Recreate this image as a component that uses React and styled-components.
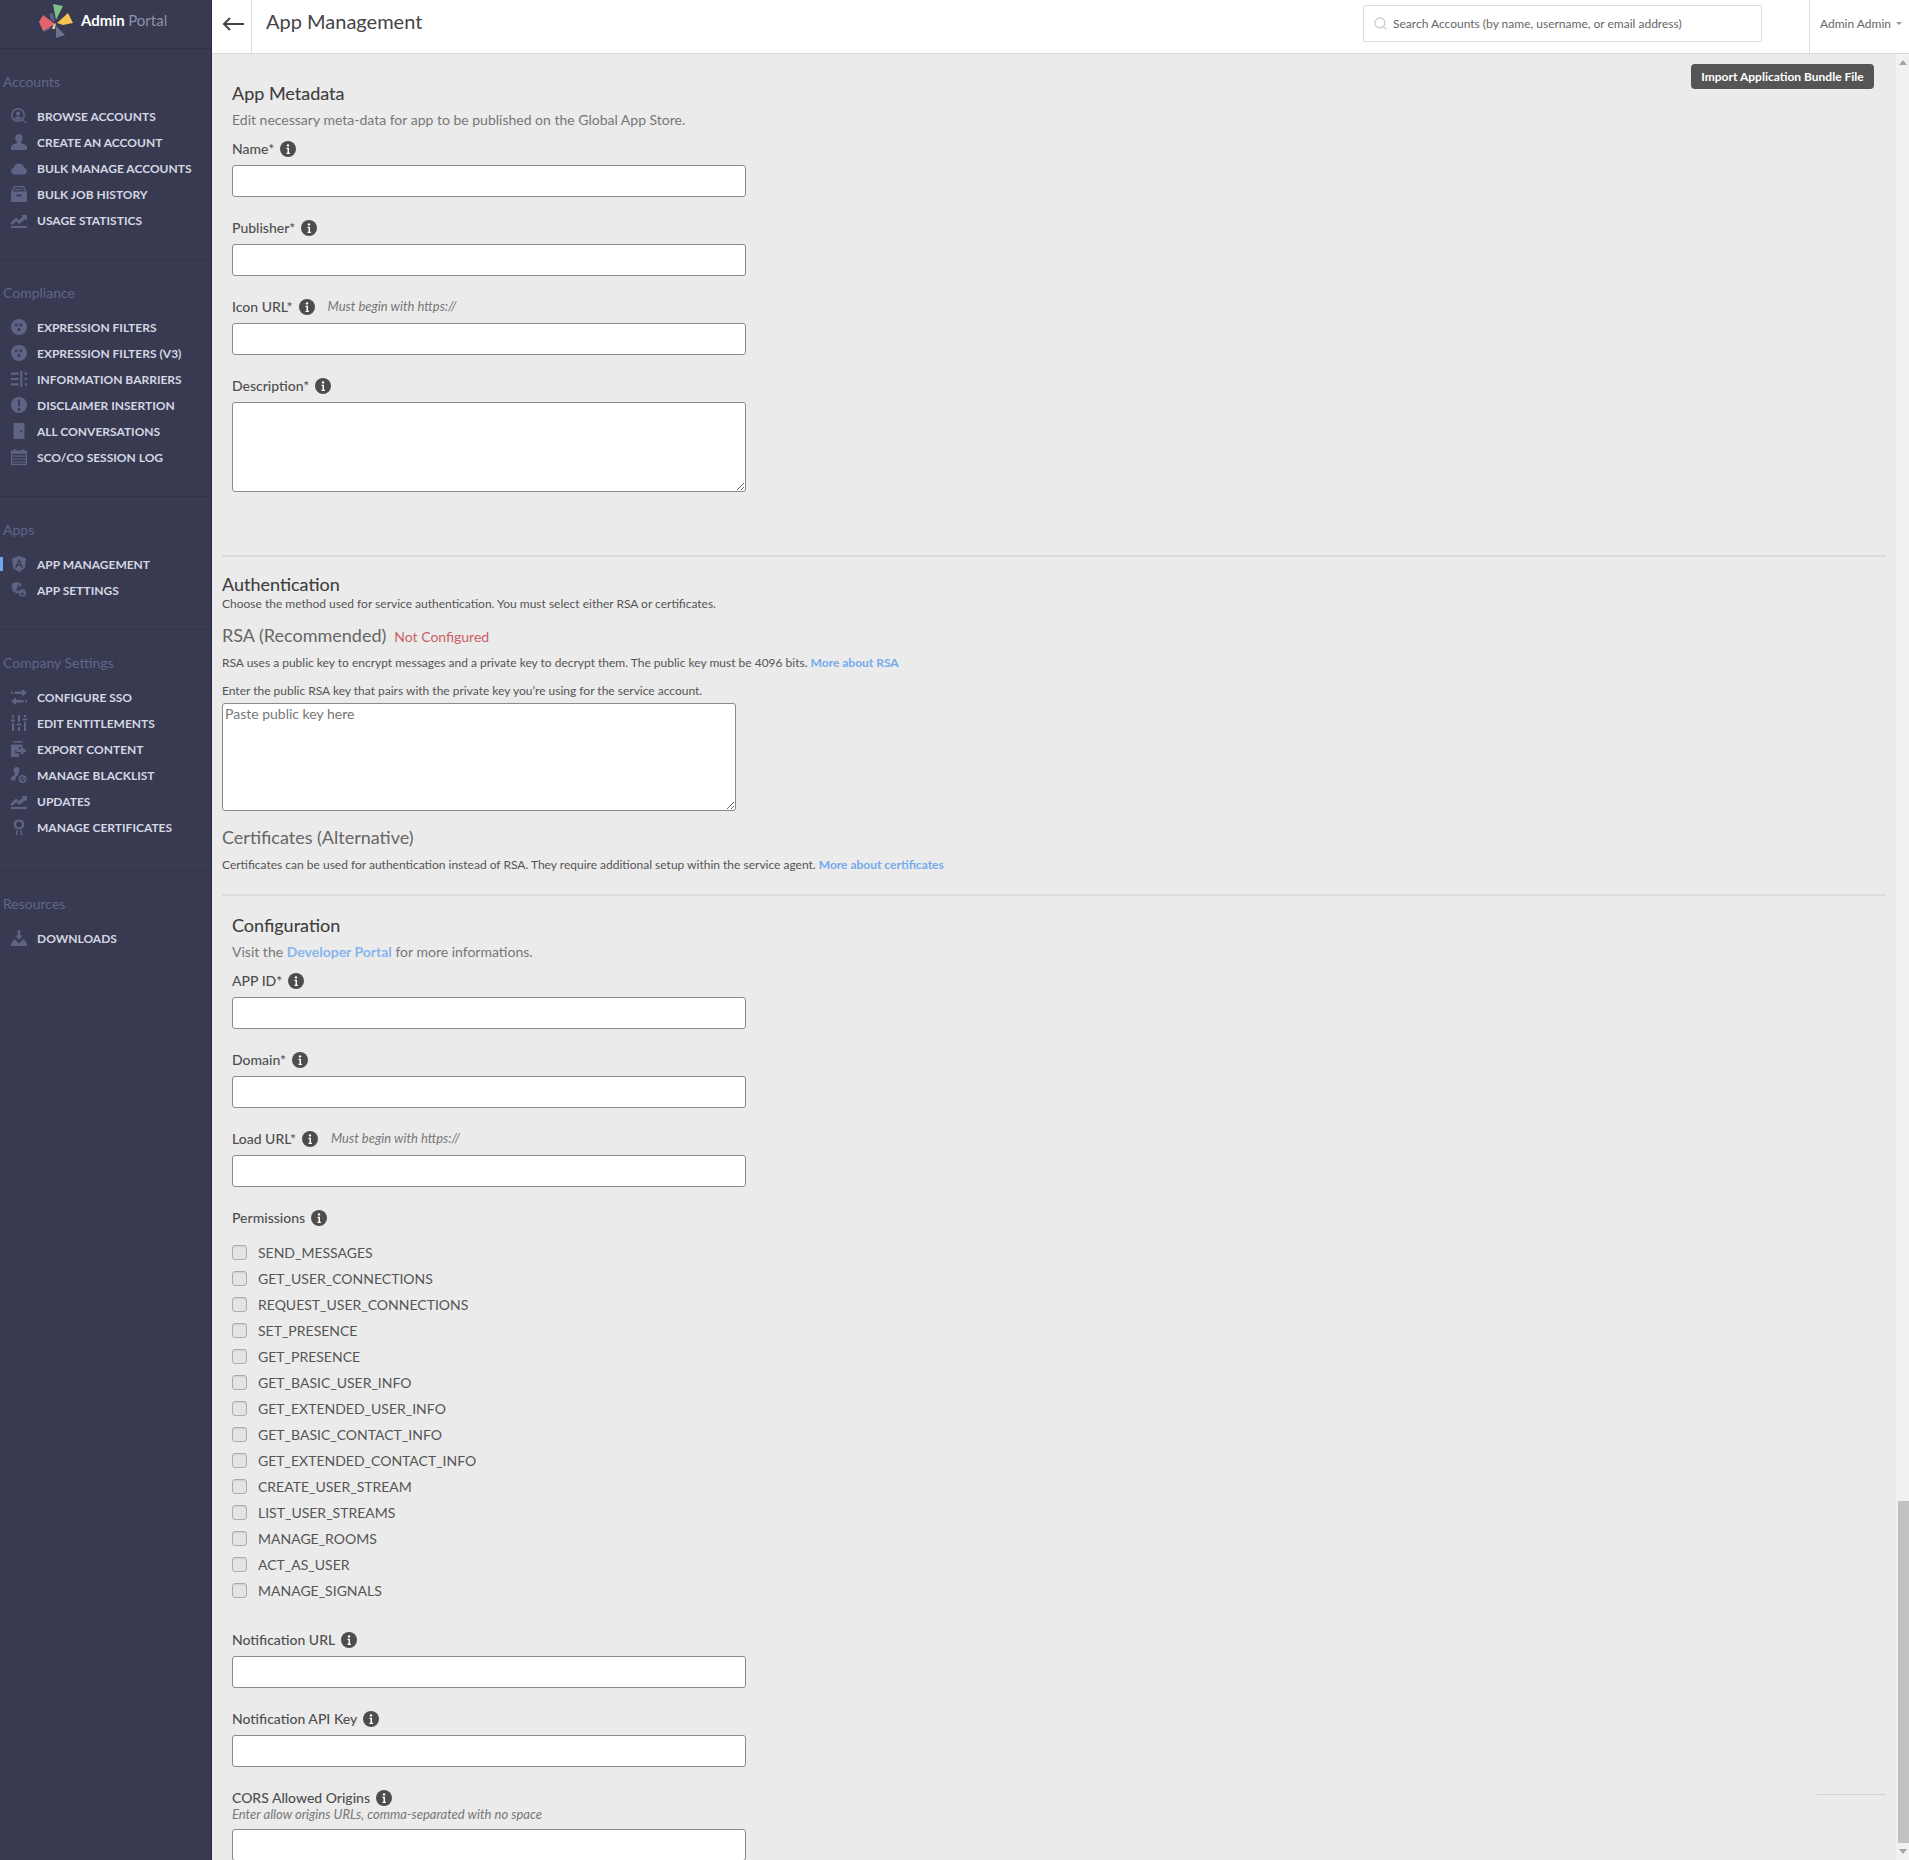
import React from 'react';
import styled, { createGlobalStyle } from 'styled-components';
import { Search } from 'lucide-react';

const GlobalStyle = createGlobalStyle`
    html, body {
        margin: 0;
        padding: 0;
        height: 1860px;
        overflow: hidden;
        background: #ebebeb;
        font-family: Lato, "Liberation Sans", sans-serif;
    }
    * { box-sizing: border-box; }
`;

const icons = {
    browse: <><path fillRule="evenodd" d="M7 0a7 7 0 1 1 0 14A7 7 0 0 1 7 0zm0 1.600a5.400 5.400 0 1 0 0 10.800A5.400 5.400 0 0 0 7 1.600z" /><circle cx="7" cy="5.600" r="2.100" /><path d="M3.400 10.200C4 8.800 5.400 8.400 7 8.400s3 .4 3.600 1.800A5 5 0 0 1 7 12a5 5 0 0 1-3.600-1.800zM11.400 11.200l4.400 3.600-1 1-4.300-3.700z" /></>,
    user: <path d="M8 0c2.300 0 3.700 1.700 3.700 4.100 0 1.600-.7 3-1.600 3.800v1.400c2.700.6 5.500 1.500 5.900 3.400V15c0 .6-.4 1-1 1H1c-.6 0-1-.4-1-1v-2.300c.4-1.900 3.200-2.800 5.900-3.400V7.900C5 7.100 4.300 5.700 4.300 4.100 4.300 1.700 5.700 0 8 0z" />,
    cloud: <path d="M3.400 14.500C1.500 14.500 0 13 0 11.200c0-1.600 1.100-2.900 2.600-3.200C3 5.400 5.300 3.500 8 3.500c2.600 0 4.800 1.800 5.300 4.300 1.600.4 2.700 1.800 2.700 3.400 0 1.800-1.500 3.300-3.400 3.300z" />,
    archive: <path fillRule="evenodd" d="M3 0h10l3 6.500V15c0 .6-.4 1-1 1H1c-.6 0-1-.4-1-1V6.500zm.9 1.300L2 5.600h12l-1.900-4.300zM4 3h8v.9H4zM5.500 8.500v2h5v-2z" />,
    chart: <path d="M0 10.300l5-4.800 3 2.500 3.800-3.500-1.500-1.500H16v5.500l-1.500-1.500L8.200 12 5.200 9.200 1.500 12.500H0zM0 14h16v2H0z" />,
    face: <path fillRule="evenodd" d="M8 0a8 8 0 1 1 0 16A8 8 0 0 1 8 0zM4.200 4.200l-.7.700 1 1-1 1 .7.700 1-1 1 1 .7-.7-1-1 1-1-.7-.7-1 1zm6.600 0l-1 1-1-1-.7.700 1 1-1 1 .7.700 1-1 1 1 .7-.7-1-1 1-1zM8 9c-.9 0-1.600.7-1.600 1.500v1.200h3.200v-1.200C9.600 9.700 8.900 9 8 9z" />,
    barriers: <path d="M0 1.500h7.500v2.200H0zM0 6.900h7.500v2.200H0zM0 12.300h7.500v2.200H0zM9.300 0h2v16h-2zM13.600 1.500H16v2.200h-2.400zM13.600 6.900H16v2.200h-2.400zM13.600 12.300H16v2.200h-2.400z" />,
    alert: <path fillRule="evenodd" d="M8 0a8 8 0 1 1 0 16A8 8 0 0 1 8 0zM6.800 2.500l.4 7h1.600l.4-7zM8 10.800a1.500 1.500 0 1 0 0 3 1.500 1.500 0 0 0 0-3z" />,
    door: <path fillRule="evenodd" d="M2.500 0h11v16h-11zM10.300 7.200a1 1 0 1 0 0 2 1 1 0 0 0 0-2z" />,
    calendar: <path fillRule="evenodd" d="M3 0h1.500v1.500h7V0H13v1.500h3V16H0V1.500h3zM1.200 4.800v1.800h13.600V4.800zm0 2.900v1.800h13.600V7.700zm0 2.900v1.800h13.600v-1.800zm0 2.900v1.300h13.600v-1.300z" />,
    angular: <path fillRule="evenodd" d="M8 0l7 2.500-1.100 9.400L8 16l-5.900-4.100L1 2.500zm0 2.600L4 11.800h1.700l.8-2h3l.8 2H12zm0 3.100l1 2.600H7z" />,
    appGear: <path fillRule="evenodd" d="M5.500 0l5 1.800-.5 3.200H9L7.700 2.300 4.700 9h1.200l.6-1.300h1.300l-.4 3.600H5.100L1.400 8.800.5 1.800zM12 7l.5 1.200 1.200-.4.900.9-.5 1.200 1.200.5v1.200l-1.200.5.500 1.200-.9.900-1.200-.5-.5 1.200h-1.200l-.5-1.200-1.200.5-.9-.9.500-1.200-1.200-.5v-1.200l1.200-.5-.5-1.200.9-.9 1.200.4.500-1.200zm-.6 3.400a1.400 1.400 0 1 0 0 2.800 1.400 1.400 0 0 0 0-2.800z" />,
    exchange: <path d="M11 0l5 3.700-5 3.700V5H3.500V2.500H11zM5 8.600v2.400h7.500v2.500H5V16L0 12.300zM0 2.500h1.600V5H0zM14.400 11H16v2.500h-1.600z" />,
    sliders: <path d="M1 0h2v3H1zM7 0h2v7H7zM13 0h2v2H13zM0 4.500h4v2H0zM6 8.500h4v2H6zM12 3.500h4v2h-4zM1 8h2v8H1zM7 12h2v4H7zM13 7h2v9h-2z" />,
    exportBox: <path d="M2 0h9.500v1.600H2zM0 3.400h11.500v2.900H8V9H4.200v3.300H8v2.900L8 16H1c-.6 0-1-.4-1-1zM9.800 5.500L16 9.700l-6.200 4.200v-2.800H5.500V8.300h4.300z" />,
    userBan: <path fillRule="evenodd" d="M5.500 0C7.300 0 8.500 1.300 8.500 3.200c0 1.400-.6 2.500-1.300 3.200v1.300c-1.700 1-2.700 2.800-2.700 4.800 0 .3 0 .7.100.9H0v-2.500c.4-1.500 2.200-2.300 3.800-2.700V6.400C3 5.700 2.500 4.600 2.500 3.200 2.500 1.300 3.700 0 5.500 0zm6 8a4 4 0 1 1 0 8 4 4 0 0 1 0-8zm-2.300 5.300l3.600-3.600a2.800 2.800 0 0 0-3.600 3.600zm4.600-2.600l-3.600 3.600a2.800 2.800 0 0 0 3.600-3.600z" />,
    medal: <path fillRule="evenodd" d="M8 0l1.500 1 1.800-.1.700 1.700 1.500 1-.4 1.800.4 1.800-1.500 1-.7 1.700-1.800-.1L8 10.800 6.500 9.800l-1.800.1L4 8.200 2.500 7.200l.4-1.800-.4-1.800 1.500-1 .7-1.700 1.800.1zM8 2.500a2.900 2.900 0 1 0 0 5.800 2.900 2.900 0 0 0 0-5.800zM5.500 11l1.500.4v.5L5.800 16 8 14.700 10.200 16 9 11.900v-.5l1.500-.4 1 5-3.500-1.200L4.500 16z" />,
    download: <path d="M6.800 0h2.400v5.500h2.600L8 10 4.200 5.500h2.600zM2.500 9.500h1.600L8 13.500l3.900-4h1.600L16 14v2H0v-2z" />,
};

const navGroups = [
    { title: 'Accounts', items: [['browse', 'Browse Accounts'], ['user', 'Create an Account'], ['cloud', 'Bulk Manage Accounts'], ['archive', 'Bulk Job History'], ['chart', 'Usage Statistics']] },
    { title: 'Compliance', items: [['face', 'Expression Filters'], ['face', 'Expression Filters (V3)'], ['barriers', 'Information Barriers'], ['alert', 'Disclaimer Insertion'], ['door', 'All Conversations'], ['calendar', 'SCO/CO Session Log']] },
    { title: 'Apps', items: [['angular', 'App Management', true], ['appGear', 'App Settings']] },
    { title: 'Company Settings', bottom: 30, items: [['exchange', 'Configure SSO'], ['sliders', 'Edit Entitlements'], ['exportBox', 'Export Content'], ['userBan', 'Manage Blacklist'], ['chart', 'Updates'], ['medal', 'Manage Certificates']] },
    { title: 'Resources', items: [['download', 'Downloads']], last: true },
];

const permissions = [
    'SEND_MESSAGES', 'GET_USER_CONNECTIONS', 'REQUEST_USER_CONNECTIONS', 'SET_PRESENCE', 'GET_PRESENCE',
    'GET_BASIC_USER_INFO', 'GET_EXTENDED_USER_INFO', 'GET_BASIC_CONTACT_INFO', 'GET_EXTENDED_CONTACT_INFO',
    'CREATE_USER_STREAM', 'LIST_USER_STREAMS', 'MANAGE_ROOMS', 'ACT_AS_USER', 'MANAGE_SIGNALS',
];

function Logo() {
    return (
        <LogoMark viewBox="38 3 35 36" aria-hidden="true">
            <polygon points="49,14 53,13 55,22 51,20" fill="#5f6380" />
            <polygon points="43,28 51,25 50,29 44,32" fill="#5f6380" />
            <polygon points="53,4 63,6 56,20" fill="#7fc08a" />
            <polygon points="57,23 68,13 73,23 63,25" fill="#f3c24f" />
            <polygon points="39,22 43,15 55,24 43,31" fill="#e2646c" />
            <polygon points="56,26 65,35 56,38" fill="#6d7190" />
            <polygon points="53,25 56,23 55,29 52,29" fill="#d9c9a5" />
        </LogoMark>
    );
}

function NavIcon({ name }) {
    return <IconSvg viewBox="0 0 16 16" fill="currentColor" aria-hidden="true">{icons[name]}</IconSvg>;
}

function InfoIcon() {
    return (
        <InfoSvg viewBox="0 0 16 16" aria-hidden="true">
            <circle cx="8" cy="8" r="8" fill="#4d4d4d" />
            <circle cx="8" cy="4.400" r="1.200" fill="#fff" />
            <path d="M6.500 6.800h2.500v5h1v1.100H6.500v-1.100h1v-3.900h-1z" fill="#fff" />
        </InfoSvg>
    );
}

function Field({ label, note, hint, area }) {
    return (
        <FieldBlock>
            <LabelRow $tight={!!hint}>
                <FieldLabel>{label}</FieldLabel>
                <InfoIcon />
                {note && <Note>{note}</Note>}
            </LabelRow>
            {hint && <Hint>{hint}</Hint>}
            {area ? <TextArea /> : <TextInput type="text" />}
        </FieldBlock>
    );
}

export default function App() {
    return (
        <Page>
            <GlobalStyle />
            <Sidebar>
                <Brand>
                    <Logo />
                    <BrandName>Admin <span>Portal</span></BrandName>
                </Brand>
                {navGroups.map(group => (
                    <NavGroup key={group.title} $last={group.last} $bottom={group.bottom}>
                        <GroupTitle>{group.title}</GroupTitle>
                        {group.items.map(([icon, text, active]) => (
                            <NavItem key={text} $active={active}>
                                <NavIcon name={icon} />
                                {text}
                            </NavItem>
                        ))}
                    </NavGroup>
                ))}
            </Sidebar>
            <Main>
                <TopBar>
                    <BackButton>
                        <svg width="22" height="14" viewBox="0 0 22 14" fill="none" stroke="#444" strokeWidth="2">
                            <path d="M22 7H2M8 1L2 7l6 6" />
                        </svg>
                    </BackButton>
                    <PageTitle>App Management</PageTitle>
                    <SearchBox>
                        <Search size={15} color="#c8c8c8" strokeWidth={1.800} />
                        <SearchInput placeholder="Search Accounts (by name, username, or email address)" />
                    </SearchBox>
                    <UserMenu>Admin Admin<Caret /></UserMenu>
                </TopBar>
                <Body>
                    <Content>
                        <ImportButton>Import Application Bundle File</ImportButton>
                        <FormSection>
                            <SectionTitle>App Metadata</SectionTitle>
                            <SectionText>Edit necessary meta-data for app to be published on the Global App Store.</SectionText>
                            <Field label="Name*" />
                            <Field label="Publisher*" />
                            <Field label="Icon URL*" note="Must begin with https://" />
                            <Field label="Description*" area />
                        </FormSection>
                        <Divider $top={23} />
                        <AuthSection>
                            <SectionTitle>Authentication</SectionTitle>
                            <SmallText>Choose the method used for service authentication. You must select either RSA or certificates.</SmallText>
                            <SubTitle $top={11}>RSA (Recommended)<NotConfigured>Not Configured</NotConfigured></SubTitle>
                            <SmallText $top={6}>RSA uses a public key to encrypt messages and a private key to decrypt them. The public key must be 4096 bits. <MoreLink>More about RSA</MoreLink></SmallText>
                            <SmallText $top={12}>Enter the public RSA key that pairs with the private key you’re using for the service account.</SmallText>
                            <KeyArea placeholder="Paste public key here" />
                            <SubTitle $top={14}>Certificates (Alternative)</SubTitle>
                            <SmallText $top={8}>Certificates can be used for authentication instead of RSA. They require additional setup within the service agent. <MoreLink>More about certificates</MoreLink></SmallText>
                        </AuthSection>
                        <Divider $top={21} />
                        <FormSection $top={17}>
                            <SectionTitle>Configuration</SectionTitle>
                            <SectionText>Visit the <PortalLink>Developer Portal</PortalLink> for more informations.</SectionText>
                            <Field label="APP ID*" />
                            <Field label="Domain*" />
                            <Field label="Load URL*" note="Must begin with https://" />
                            <LabelRow>
                                <PlainLabel>Permissions</PlainLabel>
                                <InfoIcon />
                            </LabelRow>
                            <CheckList>
                                {permissions.map(p => (
                                    <CheckRow key={p}>
                                        <CheckBox type="checkbox" />
                                        {p}
                                    </CheckRow>
                                ))}
                            </CheckList>
                            <Field label="Notification URL" />
                            <Field label="Notification API Key" />
                            <Field label="CORS Allowed Origins" hint="Enter allow origins URLs, comma-separated with no space" />
                        </FormSection>
                        <StrayLine />
                    </Content>
                    <ScrollBar>
                        <ScrollArrow $up />
                        <ScrollTrack><ScrollThumb /></ScrollTrack>
                        <ScrollArrow />
                    </ScrollBar>
                </Body>
            </Main>
        </Page>
    );
}

const Page = styled.div`
    display: grid;
    grid-template-columns: 212px 1fr;
    height: 1860px;
    overflow: hidden;
`;

const Sidebar = styled.nav`
    background: #373a51;
    border-right: 1px solid #2a2c3e;
    height: 100%;
`;

const Brand = styled.div`
    display: flex;
    align-items: center;
    height: 49px;
    padding-left: 38px;
    border-bottom: 1px solid #2f3146;
`;

const LogoMark = styled.svg`
    width: 35px;
    height: 36px;
    margin: -6px 8px 0 0;
`;

const BrandName = styled.div`
    font-size: 15px;
    font-weight: 700;
    color: #fff;
    margin-top: -9px;
    span {
        font-weight: 400;
        color: #8d91ab;
    }
`;

const NavGroup = styled.div`
    padding: 23px 0 ${p => (p.$last ? 0 : p.$bottom ?? 26)}px;
    border-bottom: ${p => (p.$last ? 'none' : '1px solid #313349')};
`;

const GroupTitle = styled.div`
    font-size: 14px;
    line-height: 20px;
    color: #62668a;
    padding-left: 3px;
    margin-bottom: 11px;
`;

const NavItem = styled.div`
    position: relative;
    display: flex;
    align-items: center;
    height: 26px;
    padding-left: 11px;
    font-size: 12px;
    font-weight: 700;
    text-transform: uppercase;
    color: #d5d7e3;
    &::before {
        content: '';
        display: ${p => (p.$active ? 'block' : 'none')};
        position: absolute;
        left: 0;
        top: 6px;
        width: 3px;
        height: 14px;
        background: #6fa8ee;
    }
`;

const IconSvg = styled.svg`
    width: 16px;
    height: 16px;
    margin-right: 10px;
    color: #5f6384;
    flex: none;
`;

const Main = styled.main`
    display: flex;
    flex-direction: column;
    min-width: 0;
    height: 1860px;
`;

const TopBar = styled.header`
    display: flex;
    align-items: stretch;
    flex: none;
    height: 54px;
    background: #fff;
    border-bottom: 1px solid #d9d9d9;
`;

const BackButton = styled.div`
    display: flex;
    align-items: center;
    justify-content: center;
    width: 40px;
    padding: 0 0 6px 3px;
    border-right: 1px solid #dedede;
`;

const PageTitle = styled.h1`
    flex: 1;
    margin: 0;
    padding: 8px 0 0 14px;
    font-size: 20px;
    line-height: 26px;
    font-weight: 400;
    color: #444;
`;

const SearchBox = styled.div`
    display: flex;
    align-items: center;
    gap: 5px;
    width: 399px;
    height: 37px;
    margin-top: 5px;
    padding-left: 9px;
    border: 1px solid #dcdcdc;
    border-radius: 2px;
    background: #fff;
`;

const SearchInput = styled.input`
    flex: 1;
    border: none;
    outline: none;
    padding: 0;
    font: 12px Lato, sans-serif;
    &::placeholder {
        color: #666;
        opacity: 1;
    }
`;

const UserMenu = styled.div`
    display: flex;
    align-items: center;
    width: 100px;
    margin-left: 47px;
    padding: 0 0 6px 10px;
    border-left: 1px solid #dedede;
    font-size: 12px;
    color: #666;
`;

const Caret = styled.span`
    margin-left: 5px;
    border: 3px solid transparent;
    border-top-color: #999;
    border-bottom: none;
`;

const Body = styled.div`
    display: flex;
    flex: 1;
    min-height: 0;
`;

const Content = styled.div`
    flex: 1;
    min-width: 0;
    overflow: hidden;
    position: relative;
`;

const ImportButton = styled.button`
    float: right;
    height: 25px;
    width: 183px;
    margin: 10px 22px 0 0;
    padding: 0;
    border: none;
    border-radius: 4px;
    background: #555;
    color: #fff;
    font: 700 12px Lato, sans-serif;
`;

const FormSection = styled.section`
    padding: ${p => p.$top ?? 27}px 0 20px 20px;
`;

const AuthSection = styled.section`
    padding: 15px 0 0 10px;
`;

const SectionTitle = styled.h2`
    margin: 0;
    font-size: 18px;
    line-height: 24px;
    font-weight: 400;
    color: #3d3d3d;
    -webkit-text-stroke: 0.1px #3d3d3d;
`;

const SectionText = styled.p`
    margin: 5px 0 8px;
    font-size: 14px;
    line-height: 20px;
    color: #777;
`;

const SmallText = styled.p`
    margin: ${p => p.$top ?? 0}px 0 0;
    font-size: 12px;
    line-height: 16px;
    color: #555;
`;

const SubTitle = styled.h3`
    margin: ${p => p.$top}px 0 0;
    font-size: 18px;
    line-height: 24px;
    font-weight: 400;
    color: #666;
`;

const NotConfigured = styled.span`
    margin-left: 8px;
    font-size: 14px;
    color: #c96064;
`;

const MoreLink = styled.a`
    color: #74aaec;
    font-weight: 700;
`;

const PortalLink = styled.a`
    color: #86b6ee;
    font-weight: 700;
`;

const KeyArea = styled.textarea`
    display: block;
    width: 514px;
    height: 108px;
    margin-top: 4px;
    padding: 1px 2px;
    border: 1px solid #8a8a8a;
    border-radius: 3px;
    background: #fff;
    font: 14px Lato, sans-serif;
    &::placeholder {
        color: #777;
        opacity: 1;
    }
`;

const Divider = styled.hr`
    clear: both;
    height: 2px;
    margin: ${p => p.$top}px 10px 0;
    border: none;
    background: #dcdcdc;
`;

const FieldBlock = styled.div`
    margin-bottom: 20px;
`;

const LabelRow = styled.div`
    display: flex;
    align-items: center;
    height: 20px;
    margin-bottom: ${p => (p.$tight ? 0 : 7)}px;
`;

const FieldLabel = styled.label`
    font-size: 14px;
    font-weight: 500;
    color: #4f4f4f;
`;

const PlainLabel = styled(FieldLabel)``;

const InfoSvg = styled.svg`
    width: 16px;
    height: 16px;
    margin: 1px 0 0 6px;
`;

const Note = styled.span`
    margin-left: 13px;
    font-size: 13px;
    font-style: italic;
    color: #777;
`;

const Hint = styled.div`
    font-size: 13px;
    line-height: 14px;
    font-style: italic;
    color: #777;
    margin-bottom: 8px;
`;

const TextInput = styled.input`
    display: block;
    width: 514px;
    height: 32px;
    padding: 0 6px;
    border: 1px solid #8a8a8a;
    border-radius: 3px;
    background: #fff;
`;

const TextArea = styled.textarea`
    display: block;
    width: 514px;
    height: 90px;
    border: 1px solid #8a8a8a;
    border-radius: 3px;
    background: #fff;
`;

const CheckList = styled.div`
    margin: 12px 0 26px;
`;

const CheckRow = styled.div`
    display: flex;
    align-items: center;
    height: 26px;
    font-size: 14px;
    color: #555;
`;

const CheckBox = styled.input`
    appearance: none;
    width: 15px;
    height: 15px;
    margin: 0 11px 0 0;
    background: #e4e4e4;
    border: 1px solid #adadad;
    border-radius: 3px;
    box-shadow: inset 0 1px 1px rgba(0, 0, 0, 0.08);
`;

const StrayLine = styled.div`
    position: absolute;
    left: 1605px;
    top: 1740px;
    width: 69px;
    height: 1px;
    background: #d2d2d2;
`;

const ScrollBar = styled.div`
    display: flex;
    flex-direction: column;
    flex: none;
    width: 13px;
    background: #f1f1f1;
`;

const ScrollTrack = styled.div`
    flex: 1;
    padding: 1430px 0 0 2px;
`;

const ScrollThumb = styled.div`
    height: 342px;
    background: #c1c1c1;
`;

const ScrollArrow = styled.div`
    flex: none;
    height: 17px;
    display: flex;
    align-items: center;
    justify-content: center;
    &::after {
        content: '';
        border: 4px solid transparent;
        ${p => (p.$up ? 'border-bottom: 5px solid #a3a3a3; border-top: none;' : 'border-top: 5px solid #a3a3a3; border-bottom: none;')}
    }
`;
